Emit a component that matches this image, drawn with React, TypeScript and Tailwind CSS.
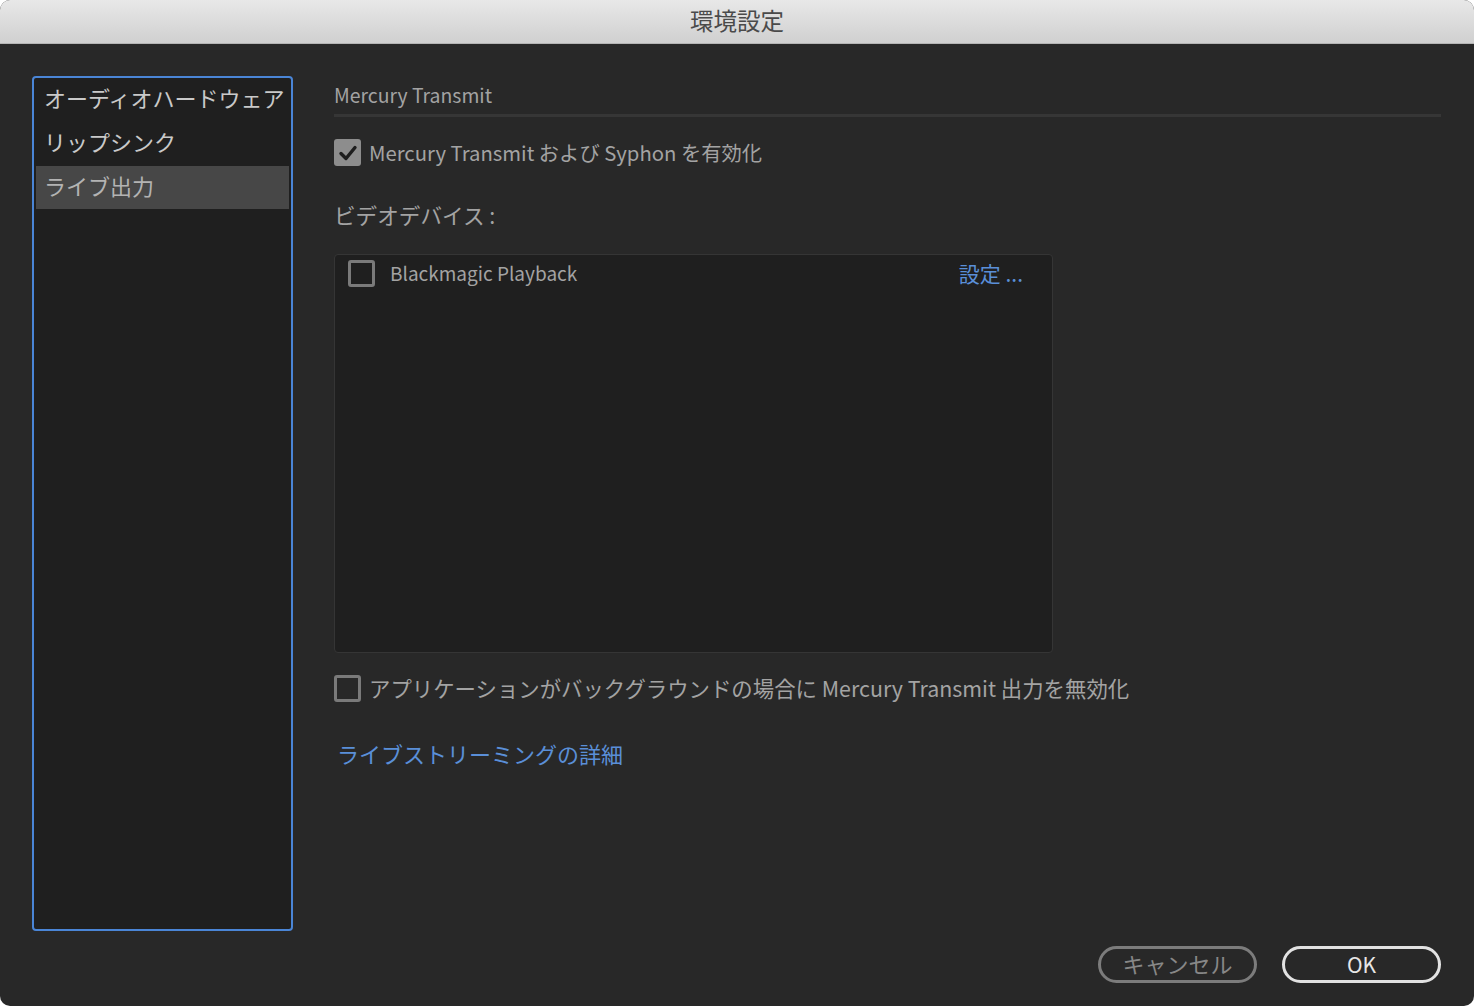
import React from "react";

const font = { fontFamily: '"Noto Sans CJK JP", "Noto Sans", sans-serif' };

function CheckIcon() {
  return (
    <svg width="20" height="18" viewBox="0 0 20 18" fill="none">
      <path d="M3 9.5 L8 14.5 L17 3.5" stroke="#1e1e1e" strokeWidth="3.4" strokeLinecap="round" strokeLinejoin="round" />
    </svg>
  );
}

export default function App() {
  return (
    <div className="w-[1474px] h-[1006px] bg-white" style={font}>
      <div className="w-full h-full rounded-[10px] overflow-hidden flex flex-col bg-[#282828]">
        {/* Title bar */}
        <div className="h-[44px] shrink-0 flex items-center justify-center bg-gradient-to-b from-[#e8e8e8] to-[#d0d0d0] border-b border-[#b5b5b5]">
          <span className="text-[23.5px] leading-none text-[#4a4a4a] pb-[1px]">環境設定</span>
        </div>

        {/* Body */}
        <div className="flex flex-1 pt-[32px] pl-[32px] pr-[33px]">
          {/* Sidebar */}
          <div className="w-[261px] h-[855px] shrink-0 border-2 border-[#4a85d6] rounded-[4px] bg-[#1f1f1f] p-[2px] pt-[0px]">
            <div className="h-[44px] flex items-center pl-[8px] pb-[6px] text-[22px] text-[#c9c9c9] whitespace-nowrap">オーディオハードウェア</div>
            <div className="h-[44px] flex items-center pl-[8px] pb-[6px] text-[22px] text-[#c9c9c9]">リップシンク</div>
            <div className="h-[43px] flex items-center pl-[8px] pb-[4px] text-[22px] text-[#b3b3b3] bg-[#474747]">ライブ出力</div>
          </div>

          {/* Right column */}
          <div className="flex-1 ml-[41px] pt-[5px] flex flex-col">
            <div className="h-[28px] leading-[28px] text-[19.4px] text-[#a3a3a3]">Mercury Transmit</div>
            <div className="h-[3px] bg-[#363636] mt-[5px]"></div>

            <div className="flex items-center mt-[22px] h-[27px]">
              <div className="w-[27px] h-[27px] rounded-[3px] bg-[#8d8d8d] flex items-center justify-center">
                <CheckIcon />
              </div>
              <span className="ml-[8px] text-[20.3px] text-[#a3a3a3] whitespace-nowrap">Mercury Transmit および Syphon を有効化</span>
            </div>

            <div className="mt-[35px] h-[28px] leading-[28px] text-[21.6px] text-[#a3a3a3]">ビデオデバイス :</div>

            <div className="mt-[25px] w-[719px] h-[399px] bg-[#1f1f1f] border border-[#353535] rounded-[4px] pt-[5px] pl-[13px] pr-[29px]">
              <div className="flex items-center h-[27px]">
                <div className="w-[27px] h-[27px] rounded-[3px] border-[3px] border-[#7a7a7a]"></div>
                <span className="ml-[15px] text-[19px] text-[#a3a3a3]">Blackmagic Playback</span>
                <span className="ml-auto text-[21px] text-[#5a8fd8]">設定 ...</span>
              </div>
            </div>

            <div className="flex items-center mt-[22px] h-[27px]">
              <div className="w-[27px] h-[27px] rounded-[3px] border-[3px] border-[#7a7a7a]"></div>
              <span className="ml-[8px] text-[21.4px] text-[#a3a3a3] whitespace-nowrap">アプリケーションがバックグラウンドの場合に Mercury Transmit 出力を無効化</span>
            </div>

            <div className="mt-[37px] ml-[3px] h-[28px] leading-[28px] text-[22px] text-[#5a8fd8]">ライブストリーミングの詳細</div>
          </div>
        </div>

        {/* Footer */}
        <div className="flex justify-end gap-[25px] pr-[33px] pb-[23px] pt-[15px]">
          <div className="w-[159px] h-[37px] rounded-full border-[3px] border-[#7c7c7c] flex items-center justify-center pb-[2px] text-[22px] text-[#878787]">キャンセル</div>
          <div className="w-[159px] h-[37px] rounded-full border-[3px] border-[#e2e2e2] flex items-center justify-center text-[21px] text-[#e6e6e6]">OK</div>
        </div>
      </div>
    </div>
  );
}
